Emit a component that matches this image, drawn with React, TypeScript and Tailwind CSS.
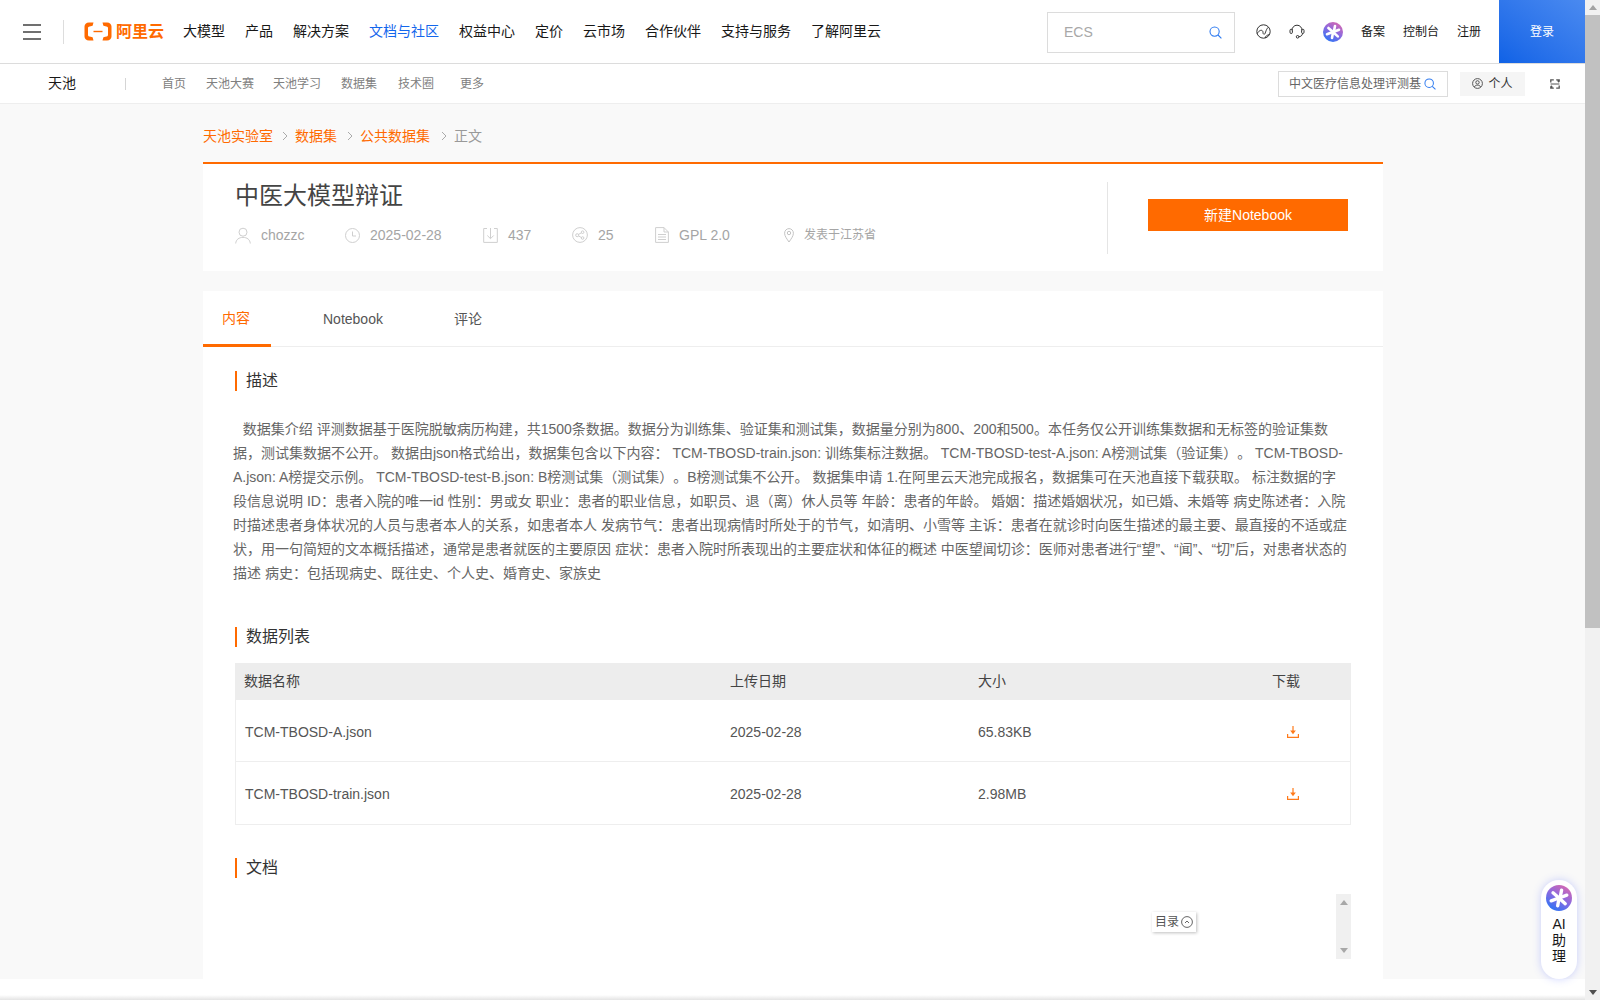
import React from "react";

function Bars() {
  return (
    <div className="flex flex-col gap-[5px] w-[18px]">
      <span className="h-[2px] bg-[#707070]" />
      <span className="h-[2px] bg-[#707070]" />
      <span className="h-[2px] bg-[#707070]" />
    </div>
  );
}

function Logo() {
  return (
    <div className="flex items-center gap-[4px] text-[#ff6a00]">
      <svg width="28" height="19" viewBox="0 0 28 19" fill="none">
        <path d="M9.5 0.5H5C2.2 0.5 0.5 2.2 0.5 4.5V14.5C0.5 16.8 2.2 18.5 5 18.5H9.5L8.6 15.2L5.6 14.6C4.6 14.4 4 13.8 4 12.9V6.1C4 5.2 4.6 4.6 5.6 4.4L8.6 3.8Z" fill="#ff6a00" />
        <path d="M18.5 0.5H23C25.8 0.5 27.5 2.2 27.5 4.5V14.5C27.5 16.8 25.8 18.5 23 18.5H18.5L19.4 15.2L22.4 14.6C23.4 14.4 24 13.8 24 12.9V6.1C24 5.2 23.4 4.6 22.4 4.4L19.4 3.8Z" fill="#ff6a00" />
        <rect x="9.5" y="8.8" width="9" height="1.4" fill="#ff6a00" />
      </svg>
      <span className="text-[16px] font-bold leading-none">阿里云</span>
    </div>
  );
}

function Search({ size = 13 }: { size?: number }) {
  return (
    <svg width={size} height={size} viewBox="0 0 13 13" fill="none" stroke="#2f7bf0" strokeWidth="1.1">
      <circle cx="5.6" cy="5.6" r="4.6" />
      <path d="M9 9L12.4 12.4" />
    </svg>
  );
}

function Globe() {
  return (
    <svg width="15" height="15" viewBox="0 0 15 15" fill="none" stroke="#333" strokeWidth="1">
      <circle cx="7.5" cy="7.5" r="6.7" />
      <path d="M1.2 9.6C2.6 7 4.8 5.6 6.2 6.6C7.6 7.6 6.4 9.6 7.8 10.2C9.6 10.9 9.4 5.6 12.4 3.2" />
      <path d="M9.2 14C9.4 12.2 11 11 13.4 10.6" />
    </svg>
  );
}

function Headset() {
  return (
    <svg width="16" height="15" viewBox="0 0 16 15" fill="none" stroke="#333" strokeWidth="1">
      <path d="M3 6.5C3 3.5 5 1.2 8 1.2C11 1.2 13 3.5 13 6.5" />
      <rect x="1" y="5.2" width="2.4" height="4.3" rx="1.2" />
      <rect x="12.6" y="5.2" width="2.4" height="4.3" rx="1.2" />
      <path d="M13.5 9.5C13.3 11.6 11.8 12.6 9.8 12.8" />
      <circle cx="8.6" cy="12.8" r="1.3" />
    </svg>
  );
}

function AiMark({ size, id }: { size: number; id: string }) {
  return (
    <svg width={size} height={size} viewBox="0 0 20 20">
      <defs>
        <linearGradient id={id} x1="0.85" y1="0.05" x2="0.3" y2="1">
          <stop offset="0" stopColor="#d868b0" />
          <stop offset="0.5" stopColor="#8a6ae0" />
          <stop offset="1" stopColor="#2f74f5" />
        </linearGradient>
      </defs>
      <circle cx="10" cy="10" r="10" fill={`url(#${id})`} />
      <g stroke="#fff" strokeWidth="2.6" strokeLinecap="round">
        <path d="M10.8 10L12 4" />
        <path d="M10.2 10L16 7.8" />
        <path d="M10.2 10.2L14.8 14.4" />
        <path d="M10 10.2L9 16" />
        <path d="M9.8 10L4 12.2" />
        <path d="M9.8 9.8L5.4 6" />
      </g>
    </svg>
  );
}

function Chevron() {
  return (
    <svg width="6" height="10" viewBox="0 0 6 10" fill="none" stroke="#aaa" strokeWidth="1">
      <path d="M1 1L5 5L1 9" />
    </svg>
  );
}

const metaStroke = "#cfcfcf";

function UserIcon() {
  return (
    <svg width="16" height="17" viewBox="0 0 16 17" fill="none" stroke={metaStroke} strokeWidth="1">
      <circle cx="8" cy="5.2" r="4" />
      <path d="M0.7 16.5C1 12.5 4 10.4 8 10.4C12 10.4 15 12.5 15.3 16.5" />
    </svg>
  );
}
function ClockIcon() {
  return (
    <svg width="15" height="15" viewBox="0 0 15 15" fill="none" stroke={metaStroke} strokeWidth="1">
      <circle cx="7.5" cy="7.5" r="7" />
      <path d="M7.5 3.5V8H11" />
    </svg>
  );
}
function DownBox() {
  return (
    <svg width="15" height="16" viewBox="0 0 15 16" fill="none" stroke={metaStroke} strokeWidth="1">
      <path d="M4 1.5H0.7V15.4H14.3V1.5H11" />
      <path d="M7.5 1V11.5M4.3 8.5L7.5 11.7L10.7 8.5" />
    </svg>
  );
}
function ShareIcon() {
  return (
    <svg width="16" height="16" viewBox="0 0 16 16" fill="none" stroke={metaStroke} strokeWidth="1">
      <circle cx="8" cy="8" r="7.4" />
      <circle cx="5.2" cy="8.2" r="1.5" />
      <circle cx="10.6" cy="5.2" r="1.3" />
      <circle cx="10.6" cy="11" r="1.3" />
      <path d="M6.5 7.4L9.5 5.8M6.5 9L9.5 10.5" />
    </svg>
  );
}
function DocIcon() {
  return (
    <svg width="14" height="16" viewBox="0 0 14 16" fill="none" stroke={metaStroke} strokeWidth="1">
      <path d="M0.6 0.6H9L13.4 5V15.4H0.6Z" />
      <path d="M9 0.6V5H13.4M3 7.5H11M3 10H11M3 12.5H11" />
    </svg>
  );
}
function PinIcon() {
  return (
    <svg width="10" height="15" viewBox="0 0 10 15" fill="none" stroke="#c4c4c4" strokeWidth="1">
      <path d="M5 14C3 11 0.6 8.2 0.6 5.2C0.6 2.6 2.6 0.6 5 0.6C7.4 0.6 9.4 2.6 9.4 5.2C9.4 8.2 7 11 5 14Z" />
      <circle cx="5" cy="5" r="1.7" />
    </svg>
  );
}

function DownloadIcon() {
  return (
    <svg width="12" height="12" viewBox="0 0 12 12" fill="none" stroke="#ff7a1a" strokeWidth="1.2">
      <path d="M6 0V6" />
      <path d="M4.4 5.2L6 7.2L7.6 5.2Z" fill="#ff7a1a" />
      <path d="M0.6 8V11.3H11.4V8" />
    </svg>
  );
}

function SectionHead({ children }: { children: React.ReactNode }) {
  return (
    <div className="flex items-center h-[20px] border-l-2 border-[#ff6a00] pl-[9px] text-[16px] text-[#333]">
      {children}
    </div>
  );
}

const lines = [
  "\u00a0\u00a0数据集介绍 评测数据基于医院脱敏病历构建，共1500条数据。数据分为训练集、验证集和测试集，数据量分别为800、200和500。本任务仅公开训练集数据和无标签的验证集数",
  "据，测试集数据不公开。 数据由json格式给出，数据集包含以下内容： TCM-TBOSD-train.json: 训练集标注数据。 TCM-TBOSD-test-A.json: A榜测试集（验证集）。 TCM-TBOSD-",
  "A.json: A榜提交示例。 TCM-TBOSD-test-B.json: B榜测试集（测试集）。B榜测试集不公开。 数据集申请 1.在阿里云天池完成报名，数据集可在天池直接下载获取。 标注数据的字",
  "段信息说明 ID：患者入院的唯一id 性别：男或女 职业：患者的职业信息，如职员、退（离）休人员等 年龄：患者的年龄。 婚姻：描述婚姻状况，如已婚、未婚等 病史陈述者：入院",
  "时描述患者身体状况的人员与患者本人的关系，如患者本人 发病节气：患者出现病情时所处于的节气，如清明、小雪等 主诉：患者在就诊时向医生描述的最主要、最直接的不适或症",
  "状，用一句简短的文本概括描述，通常是患者就医的主要原因 症状：患者入院时所表现出的主要症状和体征的概述 中医望闻切诊：医师对患者进行“望”、“闻”、“切”后，对患者状态的",
  "描述 病史：包括现病史、既往史、个人史、婚育史、家族史",
];

const rows = [
  ["TCM-TBOSD-A.json", "2025-02-28", "65.83KB"],
  ["TCM-TBOSD-train.json", "2025-02-28", "2.98MB"],
];

const topNav = ["大模型", "产品", "解决方案", "文档与社区", "权益中心", "定价", "云市场", "合作伙伴", "支持与服务", "了解阿里云"];

function Meta({ icon, text, className, textClass = "text-[14px]" }: { icon: React.ReactNode; text: string; className: string; textClass?: string }) {
  return (
    <div className={`flex items-center ${className}`}>
      {icon}
      <span className={`ml-[10px] ${textClass} text-[#a5a5a5]`}>{text}</span>
    </div>
  );
}

export default function App() {
  return (
    <div className="relative flex w-[1600px] h-[1000px] overflow-hidden bg-white [text-spacing-trim:space-all] [font-family:'Liberation_Sans','Noto_Sans_CJK_SC',sans-serif]">
      <div className="flex flex-col w-[1585px] shrink-0">
        {/* top nav */}
        <header className="flex items-center h-[64px] shrink-0 border-b border-[#dcdcdc] pl-[23px]">
          <Bars />
          <span className="ml-[22px] w-px h-[24px] bg-[#dddddd]" />
          <div className="ml-[20px]">
            <Logo />
          </div>
          <nav className="ml-[19px] flex gap-[20px] text-[14px] text-[#181818]">
            {topNav.map((t) => (
              <span key={t} className={t === "文档与社区" ? "text-[#1366ec]" : ""}>
                {t}
              </span>
            ))}
          </nav>
          <div className="ml-auto flex items-center h-full">
            <div className="flex items-center justify-between w-[188px] h-[41px] mt-[2px] border border-[#dcdcdc] pl-[16px] pr-[12px]">
              <span className="text-[14px] text-[#a8a8a8]">ECS</span>
              <Search />
            </div>
            <div className="ml-[21px]">
              <Globe />
            </div>
            <div className="ml-[18px]">
              <Headset />
            </div>
            <div className="ml-[18px]">
              <AiMark size={20} id="ai-top" />
            </div>
            <span className="ml-[18px] text-[12px] text-[#181818]">备案</span>
            <span className="ml-[18px] text-[12px] text-[#181818]">控制台</span>
            <span className="ml-[18px] text-[12px] text-[#181818]">注册</span>
            <div className="ml-[18px] flex items-center justify-center w-[86px] h-[63px] pt-[1px] bg-gradient-to-tr from-[#0f62e6] to-[#4a8af0] text-[12px] text-white">
              登录
            </div>
          </div>
        </header>

        {/* sub nav */}
        <div className="flex items-center h-[40px] shrink-0 border-b border-[#eeeeee]">
          <span className="ml-[48px] text-[14px] text-[#181818]">天池</span>
          <span className="ml-[49px] w-px h-[12px] bg-[#d5d5d5]" />
          <nav className="ml-[36px] flex text-[12px] text-[#808080]">
            <span>首页</span>
            <span className="ml-[20px]">天池大赛</span>
            <span className="ml-[19px]">天池学习</span>
            <span className="ml-[20px]">数据集</span>
            <span className="ml-[21px]">技术圈</span>
            <span className="ml-[26px]">更多</span>
          </nav>
          <div className="ml-auto flex items-center">
            <div className="flex items-center justify-between w-[170px] h-[26px] border border-[#dcdcdc] pl-[10px] pr-[11px]">
              <span className="text-[12px] text-[#666] whitespace-nowrap overflow-hidden w-[132px]">中文医疗信息处理评测基</span>
              <Search size={12} />
            </div>
            <div className="ml-[12px] flex items-center justify-center gap-[5px] w-[65px] h-[24px] bg-[#f5f5f5] text-[12px] text-[#333]">
              <svg width="11" height="11" viewBox="0 0 11 11" fill="none" stroke="#555" strokeWidth="1">
                <circle cx="5.5" cy="5.5" r="4.9" />
                <circle cx="5.5" cy="4.4" r="1.7" />
                <path d="M2.4 9C3 7.6 4 7.2 5.5 7.2C7 7.2 8 7.6 8.6 9" />
              </svg>
              个人
            </div>
            <div className="ml-[25px] mr-[25px]">
              <svg width="10" height="10" viewBox="0 0 10 10" fill="none" stroke="#555" strokeWidth="1.3">
                <path d="M3.8 0.8H0.8V3.6M6.2 0.8H9.2V2.6M7.6 1.6L9.2 3.2" />
                <path d="M3.8 9.2H0.8V7.4M6.2 9.2H9.2V6.4M0.8 6.8L2.4 8.4" />
                <path d="M0.6 5H9.4" strokeWidth="1" />
              </svg>
            </div>
          </div>
        </div>

        {/* main */}
        <main className="flex-1 min-h-0 bg-[#f9f9f9] pl-[203px] pr-[202px]">
          <div className="flex items-center h-[58px] pt-[6px] text-[14px] text-[#ff6a00]">
            <span>天池实验室</span>
            <span className="ml-[9px] mr-[7px]"><Chevron /></span>
            <span>数据集</span>
            <span className="ml-[10px] mr-[7px]"><Chevron /></span>
            <span>公共数据集</span>
            <span className="ml-[11px] mr-[7px]"><Chevron /></span>
            <span className="text-[#999]">正文</span>
          </div>

          <section className="flex h-[109px] bg-white border-t-2 border-[#ff6a00]">
            <div className="flex-1 pl-[32px]">
              <h1 className="mt-[14px] text-[24px] leading-[36px] text-[#444]">中医大模型辩证</h1>
              <div className="mt-[11px] flex items-center h-[20px]">
                <Meta icon={<UserIcon />} text="chozzc" className="w-[110px]" />
                <Meta icon={<ClockIcon />} text="2025-02-28" className="w-[138px]" />
                <Meta icon={<DownBox />} text="437" className="w-[89px]" />
                <Meta icon={<ShareIcon />} text="25" className="w-[83px]" />
                <Meta icon={<DocIcon />} text="GPL 2.0" className="w-[129px]" textClass="text-[14px] ml-[1px]" />
                <Meta icon={<PinIcon />} text="发表于江苏省" className="" textClass="text-[12px] ml-[2px]" />
              </div>
            </div>
            <div className="flex items-center w-[276px] h-[72px] mt-[18px] border-l border-[#e5e5e5]">
              <div className="ml-[40px] mb-[6px] flex items-center justify-center w-[200px] h-[32px] bg-[#ff6a00] text-[14px] text-white">
                新建Notebook
              </div>
            </div>
          </section>

          <section className="mt-[20px] h-[688px] bg-white">
            <div className="flex h-[56px] border-b border-[#eeeeee] text-[14px] text-[#555]">
              <div className="flex items-center justify-center w-[68px] h-[56px] pt-[2px] pr-[2px] border-b-[3px] border-[#ff6a00] text-[#ff6a00]">内容</div>
              <div className="flex items-center pt-[2px] ml-[52px]">Notebook</div>
              <div className="flex items-center pt-[2px] ml-[71px]">评论</div>
            </div>

            <div className="pl-[32px] pr-[32px] pt-[24px]">
              <SectionHead>描述</SectionHead>
              <div className="mt-[26px] -ml-[2px] text-[14px] leading-[24px] text-[#666] whitespace-nowrap">
                {lines.map((l, i) => (
                  <div key={l} className={i === 0 ? "pl-[2px]" : ""}>{l}</div>
                ))}
              </div>

              <div className="mt-[42px]">
                <SectionHead>数据列表</SectionHead>
              </div>
              <div className="mt-[16px] border-x border-b border-[#eeeeee] text-[14px]">
                <div className="grid grid-cols-[495px_248px_1fr_80px] items-center h-[37px] -mx-px bg-[#ededed] text-[#444]">
                  <span className="pl-[9px]">数据名称</span>
                  <span>上传日期</span>
                  <span>大小</span>
                  <span className="pl-[1px]">下载</span>
                </div>
                {rows.map((r, i) => (
                  <div
                    key={r[0]}
                    className={`grid grid-cols-[494px_248px_1fr_80px] items-center h-[62px] text-[#555] ${i === 0 ? "pt-[4px] border-b border-[#eeeeee]" : "pt-[2px]"}`}
                  >
                    <span className="pl-[9px]">{r[0]}</span>
                    <span>{r[1]}</span>
                    <span>{r[2]}</span>
                    <span className={`pl-[17px] flex ${i === 0 ? "-mt-[2px]" : ""}`}>
                      <DownloadIcon />
                    </span>
                  </div>
                ))}
              </div>

              <div className="mt-[33px]">
                <SectionHead>文档</SectionHead>
              </div>

              <div className="relative mt-[16px] flex justify-end h-[65px]">
                <div className="flex flex-col items-center justify-between w-[15px] bg-[#f0f0f0] py-[6px]">
                  <span className="w-0 h-0 border-x-[4px] border-x-transparent border-b-[5px] border-b-[#a8a8a8]" />
                  <span className="w-0 h-0 border-x-[4px] border-x-transparent border-t-[5px] border-t-[#a8a8a8]" />
                </div>
                <div className="absolute left-[917px] top-[18px] flex items-center gap-[2px] w-[44px] h-[20px] bg-white pl-[3px] text-[12px] text-[#555] shadow-[1px_1px_3px_rgba(0,0,0,0.25)]">
                  目录
                  <svg width="12" height="12" viewBox="0 0 12 12" fill="none" stroke="#666" strokeWidth="1">
                    <circle cx="6" cy="6" r="5.4" />
                    <path d="M4 7L6 5L8 7" />
                  </svg>
                </div>
              </div>
            </div>
          </section>
        </main>

        {/* bottom band */}
        <div className="h-[16px] shrink-0 bg-white" />
        <div className="h-[5px] shrink-0 bg-gradient-to-b from-white to-[#e4e4e4]" />
      </div>

      {/* scrollbar */}
      <div className="flex flex-col w-[15px] shrink-0 bg-[#f1f1f1]">
        <div className="flex justify-center items-center h-[15px]">
          <span className="w-0 h-0 border-x-[4px] border-x-transparent border-b-[5px] border-b-[#a3a3a3]" />
        </div>
        <div className="h-[613px] bg-[#c1c1c1]" />
        <div className="mt-auto flex justify-center items-center h-[15px]">
          <span className="w-0 h-0 border-x-[4px] border-x-transparent border-t-[5px] border-t-[#505050]" />
        </div>
      </div>

      {/* floating AI */}
      <div className="absolute left-[1541px] top-[880px] flex flex-col items-center w-[36px] h-[99px] pt-[5px] rounded-[18px] bg-white shadow-[0_0_8px_rgba(90,110,255,0.3)]">
        <AiMark size={26} id="ai-float" />
        <div className="mt-[5px] text-[14px] leading-[16px] text-[#181818] text-center">
          <div>AI</div>
          <div>助</div>
          <div>理</div>
        </div>
      </div>
    </div>
  );
}
